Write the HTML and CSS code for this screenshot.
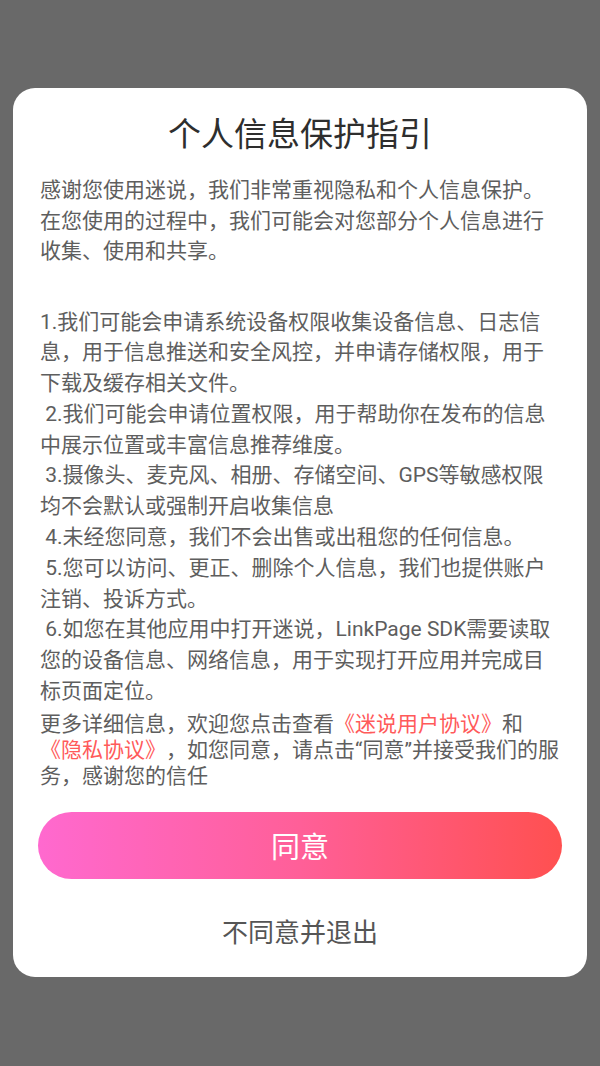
FILE: index.html
```html
<!DOCTYPE html>
<html lang="zh-CN">
<head>
<meta charset="utf-8">
<title>个人信息保护指引</title>
<link rel="stylesheet" href="styles.css">
</head>
<body>
<div class="overlay">
  <div class="dialog">
    <h1 class="title">个人信息保护指引</h1>
    <p class="intro">感谢您使用迷说，我们非常重视隐私和个人信息保护。<br>在您使用的过程中，我们可能会对您部分个人信息进行<br>收集、使用和共享。</p>
    <p class="items">1.我们可能会申请系统设备权限收集设备信息、日志信<br>息，用于信息推送和安全风控，并申请存储权限，用于<br>下载及缓存相关文件。<br>&nbsp;2.我们可能会申请位置权限，用于帮助你在发布的信息<br>中展示位置或丰富信息推荐维度。<br>&nbsp;3.摄像头、麦克风、相册、存储空间、GPS等敏感权限<br>均不会默认或强制开启收集信息<br>&nbsp;4.未经您同意，我们不会出售或出租您的任何信息。<br>&nbsp;5.您可以访问、更正、删除个人信息，我们也提供账户<br>注销、投诉方式。<br>&nbsp;6.如您在其他应用中打开迷说，LinkPage SDK需要读取<br>您的设备信息、网络信息，用于实现打开应用并完成目<br>标页面定位。</p>
    <p class="more">更多详细信息，欢迎您点击查看<span class="link">《迷说用户协议》</span>和<br><span class="link">《隐私协议》</span>，如您同意，请点击“同意”并接受我们的服<br>务，感谢您的信任</p>
    <button class="agree">同意</button>
    <div class="refuse">不同意并退出</div>
  </div>
</div>
</body>
</html>
```
FILE: styles.css
```css
html, body {
  margin: 0;
  padding: 0;
}
body {
  width: 600px;
  height: 1066px;
  background: #696969;
  font-family: Roboto, "Noto Sans CJK SC", sans-serif;
  overflow: hidden;
  text-spacing-trim: space-all;
}
.overlay {
  padding-top: 88px;
  padding-left: 13px;
}
.dialog {
  box-sizing: border-box;
  width: 574px;
  height: 889px;
  background: #ffffff;
  border-radius: 22px;
  padding: 27px 25px 0 25px;
  display: flex;
  flex-direction: column;
}
.title {
  margin: 0;
  font-size: 33px;
  line-height: 40px;
  font-weight: 400;
  color: #2e2e2e;
  text-align: center;
}
.intro, .items, .more {
  margin: 0;
  padding-left: 2px;
  font-size: 21px;
  color: #5e5e5e;
  white-space: nowrap;
  text-spacing-trim: space-all;
}
.intro {
  margin-top: 20px;
  line-height: 30.5px;
}
.items {
  margin-top: 40px;
  line-height: 30.8px;
}
.more {
  margin-top: 4px;
  line-height: 26px;
}
.link {
  color: #ff5a5a;
}
.agree {
  margin-top: 23px;
  height: 67px;
  width: 100%;
  border: none;
  border-radius: 34px;
  background: linear-gradient(90deg, #ff69cf 0%, #ff5f98 50%, #ff5050 100%);
  color: #ffffff;
  font-family: Roboto, "Noto Sans CJK SC", sans-serif;
  font-size: 29px;
  padding: 0;
}
.refuse {
  margin-top: 34px;
  font-size: 26px;
  line-height: 40px;
  color: #555555;
  text-align: center;
}
```
